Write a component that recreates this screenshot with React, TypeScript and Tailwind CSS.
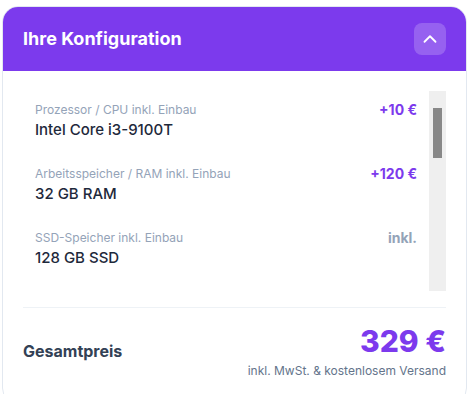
import React from 'react'
import { ChevronUp } from 'lucide-react'

interface ConfigItem {
  label: string
  value: string
  price: string
  included?: boolean
}

const items: ConfigItem[] = [
  { label: 'Prozessor / CPU inkl. Einbau', value: 'Intel Core i3-9100T', price: '+10 €' },
  { label: 'Arbeitsspeicher / RAM inkl. Einbau', value: '32 GB RAM', price: '+120 €' },
  { label: 'SSD-Speicher inkl. Einbau', value: '128 GB SSD', price: 'inkl.', included: true },
  { label: 'Festplatte / HDD inkl. Einbau', value: 'Keine HDD', price: 'inkl.', included: true },
  { label: 'Grafikkarte inkl. Einbau', value: 'Intel UHD Graphics 630', price: 'inkl.', included: true },
  { label: 'WLAN / Bluetooth', value: 'Ohne WLAN', price: 'inkl.', included: true },
  { label: 'Betriebssystem', value: 'Windows 11 Pro', price: '+0 €' },
  { label: 'Office-Paket', value: 'Ohne Office', price: 'inkl.', included: true },
  { label: 'Garantie', value: '12 Monate Garantie', price: 'inkl.', included: true },
  { label: 'Zubehör', value: 'Netzteil', price: 'inkl.', included: true },
]

export default function App(): JSX.Element {
  return (
    <div className="w-[472px] h-[394px] bg-white overflow-hidden font-['Inter',sans-serif]">
      <div className="ml-[2px] mt-[6px] w-[465px] border border-[#e2e8f0] rounded-2xl overflow-hidden bg-white">
        {/* Header */}
        <div className="h-16 bg-[#7c3aed] flex items-center justify-between pl-5 pr-5">
          <h2 className="text-lg font-bold text-white">Ihre Konfiguration</h2>
          <button className="w-8 h-8 rounded-lg bg-white/20 flex items-center justify-center text-white">
            <ChevronUp size={22} strokeWidth={2} />
          </button>
        </div>

        {/* Body */}
        <div className="px-5 pt-5">
          <div className="h-[200px] flex">
            <div className="flex-1 overflow-hidden">
              {items.map((item) => (
                <div key={item.label} className="h-16 px-3 pt-[9px] flex justify-between">
                  <div>
                    <div className="text-xs leading-5 text-[#94a3b8]">{item.label}</div>
                    <div className="text-[15px] leading-5 font-medium text-[#1e293b]">{item.value}</div>
                  </div>
                  <div
                    className={`text-[14px] leading-5 font-bold ${
                      item.included ? 'text-[#94a3b8]' : 'text-[#7c3aed]'
                    }`}
                  >
                    {item.price}
                  </div>
                </div>
              ))}
            </div>
            {/* scrollbar */}
            <div className="w-[17px] bg-[#efefef] px-1 pt-[17px]">
              <div className="h-[50px] bg-[#888888]" />
            </div>
          </div>

          {/* Total */}
          <div className="mt-4 border-t border-[#eef2f6] pt-[15px] pb-6 flex items-center justify-between">
            <div className="text-base font-bold text-[#334155]">Gesamtpreis</div>
            <div className="text-right">
              <div className="text-3xl leading-9 font-extrabold text-[#7c3aed]">329 €</div>
              <div className="text-xs leading-4 mt-1 text-[#64748b]">inkl. MwSt. &amp; kostenlosem Versand</div>
            </div>
          </div>
        </div>
      </div>
    </div>
  )
}
